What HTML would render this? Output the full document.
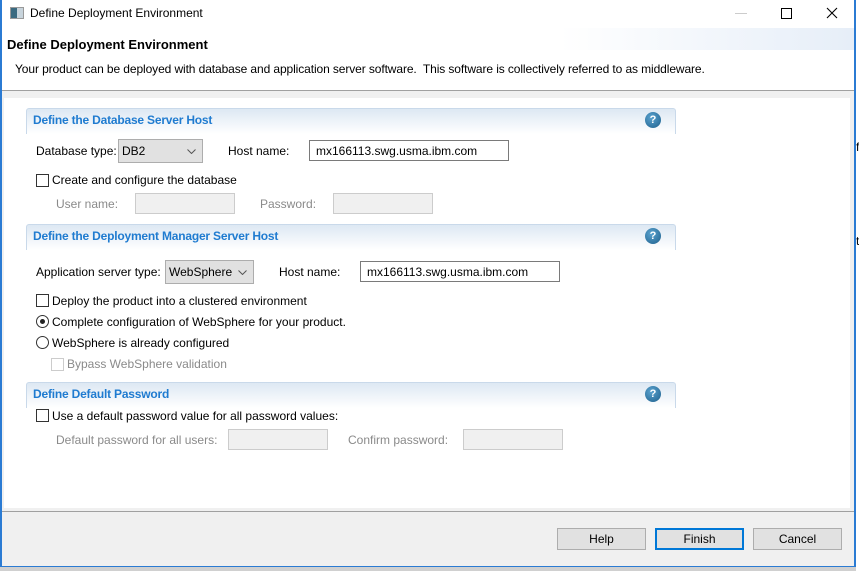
<!DOCTYPE html>
<html><head><style>
*{margin:0;padding:0;box-sizing:border-box}
body{width:859px;height:571px;background:#fff;font-family:"Liberation Sans",sans-serif;font-size:12px;color:#000;position:relative;overflow:hidden}
.a{position:absolute;white-space:nowrap}
.hdr{position:absolute;left:26px;width:650px;height:26px;border:1px solid #c9d9ea;border-bottom:none;border-radius:3px 3px 0 0;background:linear-gradient(#dde8f3,#fff)}
.hdr span{position:absolute;left:6px;top:4px;color:#1f7bd0;font-weight:bold;font-size:12px;letter-spacing:-0.2px}
.q{position:absolute;right:14px;top:3px;width:16px;height:16px;border-radius:50%;background:radial-gradient(circle at 40% 35%,#5ba3cf,#1d5f8c);color:#fff;font-weight:bold;font-size:11px;text-align:center;line-height:16px}
.cb{position:absolute;width:13px;height:13px;border:1px solid #333;background:#fff}
.rb{position:absolute;width:13px;height:13px;border:1px solid #333;border-radius:50%;background:#fff}
.in{position:absolute;height:21px;border:1px solid #7a7a7a;background:#fff;padding:3px 6px;font-size:12px}
.dis{position:absolute;height:21px;border:1px solid #ccc;background:#f0f0f0}
.sel{position:absolute;height:24px;border:1px solid #adadad;background:#e1e1e1;padding:4px 3px;font-size:12px}
.sel svg{position:absolute;right:6px;top:9px}
.g{color:#8a8a8a}
.btn{position:absolute;top:528px;width:89px;height:22px;border:1px solid #adadad;background:#e1e1e1;text-align:center;line-height:20px}
</style></head><body>
<div class="a" style="left:0;top:0;width:2px;height:567px;background:#2b7bd3"></div>
<div class="a" style="left:854px;top:0;width:2px;height:567px;background:#2b7bd3"></div>
<div class="a" style="left:0;top:566px;width:856px;height:5px;background:#d0d0d0;border-top:1px solid #2b7bd3"></div>
<div class="a" style="left:10px;top:7px;width:14px;height:12px;background:linear-gradient(90deg,#3a6a80 50%,#c8d4dc 50%);border:1px solid #999"></div>
<div class="a" style="left:30px;top:6px;font-size:12px">Define Deployment Environment</div>
<div class="a" style="left:735px;top:13px;width:12px;height:1px;background:#ccc"></div>
<div class="a" style="left:781px;top:8px;width:11px;height:11px;border:1px solid #000"></div>
<svg class="a" style="left:826px;top:7px" width="12" height="12"><path d="M1 1L11 11M11 1L1 11" stroke="#000" stroke-width="1.1"/></svg>
<div class="a" style="left:560px;top:28px;width:294px;height:22px;background:linear-gradient(90deg,#fff,#e6eef8)"></div>
<div class="a" style="left:7px;top:37px;font-size:13px;font-weight:bold">Define Deployment Environment</div>
<div class="a" style="left:15px;top:62px;letter-spacing:-0.1px">Your product can be deployed with database and application server software.&nbsp; This software is collectively referred to as middleware.</div>
<div class="a" style="left:2px;top:90px;width:852px;height:1px;background:#a0a0a0"></div>
<div class="a" style="left:2px;top:91px;width:852px;height:420px;background:#f0f0f0"></div>
<div class="a" style="left:4px;top:98px;width:846px;height:410px;background:#fff"></div>
<div class="a" style="left:2px;top:511px;width:852px;height:1px;background:#a0a0a0"></div>
<div class="a" style="left:2px;top:512px;width:852px;height:54px;background:#f0f0f0"></div>

<div class="hdr" style="top:108px"><span>Define the Database Server Host</span><div class="q">?</div></div>
<div class="a" style="left:36px;top:144px">Database type:</div>
<div class="sel" style="left:118px;top:139px;width:85px">DB2<svg width="9" height="5"><path d="M0.5 0.5L4.5 4.5L8.5 0.5" fill="none" stroke="#555"/></svg></div>
<div class="a" style="left:228px;top:144px">Host name:</div>
<div class="in" style="left:309px;top:140px;width:200px">mx166113.swg.usma.ibm.com</div>
<div class="cb" style="left:36px;top:174px"></div>
<div class="a" style="left:52px;top:173px">Create and configure the database</div>
<div class="a g" style="left:56px;top:197px">User name:</div>
<div class="dis" style="left:135px;top:193px;width:100px"></div>
<div class="a g" style="left:260px;top:197px">Password:</div>
<div class="dis" style="left:333px;top:193px;width:100px"></div>

<div class="hdr" style="top:224px"><span>Define the Deployment Manager Server Host</span><div class="q">?</div></div>
<div class="a" style="left:36px;top:265px">Application server type:</div>
<div class="sel" style="left:165px;top:260px;width:89px">WebSphere<svg width="9" height="5"><path d="M0.5 0.5L4.5 4.5L8.5 0.5" fill="none" stroke="#555"/></svg></div>
<div class="a" style="left:279px;top:265px">Host name:</div>
<div class="in" style="left:360px;top:261px;width:200px">mx166113.swg.usma.ibm.com</div>
<div class="cb" style="left:36px;top:294px"></div>
<div class="a" style="left:52px;top:294px">Deploy the product into a clustered environment</div>
<div class="rb" style="left:36px;top:315px"><div style="position:absolute;left:3px;top:3px;width:5px;height:5px;border-radius:50%;background:#222"></div></div>
<div class="a" style="left:52px;top:315px">Complete configuration of WebSphere for your product.</div>
<div class="rb" style="left:36px;top:336px"></div>
<div class="a" style="left:52px;top:336px">WebSphere is already configured</div>
<div class="cb" style="left:51px;top:358px;border-color:#ccc"></div>
<div class="a g" style="left:67px;top:357px">Bypass WebSphere validation</div>

<div class="hdr" style="top:382px"><span>Define Default Password</span><div class="q">?</div></div>
<div class="cb" style="left:36px;top:409px"></div>
<div class="a" style="left:52px;top:409px">Use a default password value for all password values:</div>
<div class="a g" style="left:56px;top:433px">Default password for all users:</div>
<div class="dis" style="left:228px;top:429px;width:100px"></div>
<div class="a g" style="left:348px;top:433px">Confirm password:</div>
<div class="dis" style="left:463px;top:429px;width:100px"></div>

<div class="btn" style="left:557px">Help</div>
<div class="btn" style="left:655px;border:2px solid #0078d7;line-height:18px">Finish</div>
<div class="btn" style="left:753px">Cancel</div>
<div class="a" style="left:856px;top:140px;font-size:12px">f</div>
<div class="a" style="left:856px;top:234px;font-size:12px">t</div>
</body></html>
